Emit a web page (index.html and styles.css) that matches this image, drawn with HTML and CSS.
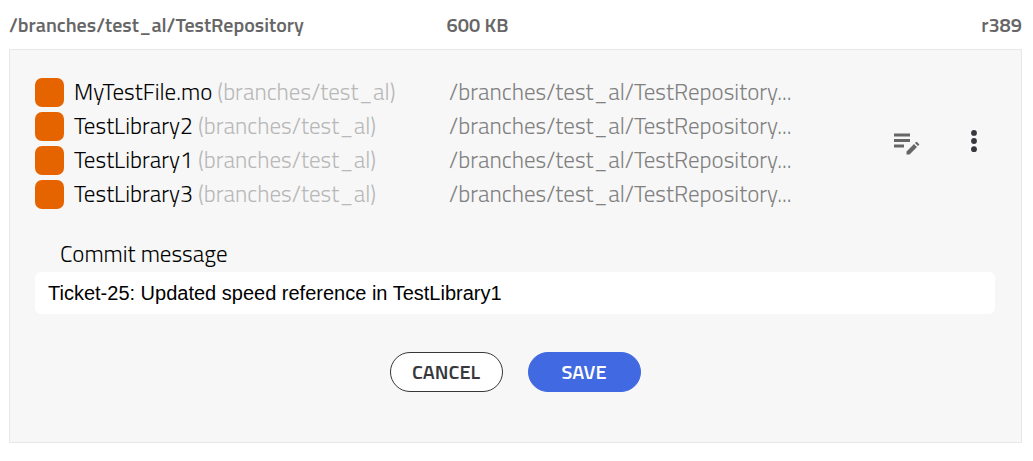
FILE: index.html
```
<!DOCTYPE html>
<html lang="en">
<head>
<meta charset="UTF-8">
<meta name="viewport" content="width=device-width, initial-scale=1.0">
<title>Commit TestRepository</title>
<link rel="stylesheet" href="styles.css">
</head>
<body>
<header class="repo-header">
    <span>/branches/test_al/TestRepository</span>
    <span>600 KB</span>
    <span>r389</span>
</header>
<main class="panel">
    <section class="changes">
        <ul class="files">
            <li class="file">
                <span class="name"><span class="status"></span>MyTestFile.mo&nbsp;<span class="branch">(branches/test_al)</span></span>
                <span class="path">/branches/test_al/TestRepository...</span>
            </li>
            <li class="file">
                <span class="name"><span class="status"></span>TestLibrary2&nbsp;<span class="branch">(branches/test_al)</span></span>
                <span class="path">/branches/test_al/TestRepository...</span>
            </li>
            <li class="file">
                <span class="name"><span class="status"></span>TestLibrary1&nbsp;<span class="branch">(branches/test_al)</span></span>
                <span class="path">/branches/test_al/TestRepository...</span>
            </li>
            <li class="file">
                <span class="name"><span class="status"></span>TestLibrary3&nbsp;<span class="branch">(branches/test_al)</span></span>
                <span class="path">/branches/test_al/TestRepository...</span>
            </li>
        </ul>
        <div class="tools">
            <button class="icon-button" type="button" aria-label="Edit message">
                <svg width="26" height="22" viewBox="0 0 26 22" fill="#666">
                    <path d="M0 0.500h16v3H0zM0 6h16v3H0zM0 11.500h10v3H0z"/>
                    <path d="M12.500 18.500L20 11L23 14L15.500 21.500H12.500zM21 10L22 9Q22.500 8.500 23 9L25 11Q25.500 11.500 25 12L24 13z"/>
                </svg>
            </button>
            <button class="icon-button" type="button" aria-label="More actions">
                <svg width="6" height="28" viewBox="0 0 6 28" fill="#37373c">
                    <circle cx="3" cy="2.900" r="2.900"/>
                    <circle cx="3" cy="11" r="2.900"/>
                    <circle cx="3" cy="19.200" r="2.900"/>
                </svg>
            </button>
        </div>
    </section>
    <form class="commit">
        <label for="message">Commit message</label>
        <input id="message" class="message" type="text" value="Ticket-25: Updated speed reference in TestLibrary1">
        <div class="buttons">
            <button class="button" type="button">CANCEL</button>
            <button class="button save" type="submit">SAVE</button>
        </div>
    </form>
</main>
</body>
</html>
```
FILE: styles.css
```
*{box-sizing:border-box;margin:0;padding:0;}
body
{
    padding: 0 11px 18px 9px;
    background: #fff;
    color: #000;
    font-family: "Titillium Web", Roboto, sans-serif;
    font-size: 23px;
    font-weight: 300;
}
.repo-header
{
    display: grid;
    grid-template-columns: 43.200% 1fr auto;
    height: 49px;
    line-height: 50px;
    color: #666;
    font-size: 20px;
    font-weight: 600;
}
.panel
{
    padding: 28px 26px 50px 25px;
    border: 1px solid #e8e8e8;
    background: #f7f7f7;
}
.changes
{
    display: flex;
    align-items: center;
}
.files
{
    flex: 1;
    display: grid;
    gap: 5px;
    list-style: none;
}
.file
{
    display: grid;
    grid-template-columns: 48.200% 1fr;
    line-height: 28px;
    white-space: nowrap;
}
.name
{
    display: flex;
}
.status
{
    width: 29px;
    height: 29px;
    margin-right: 10px;
    border-radius: 7px;
    background: #e66400;
}
.branch
{
    color: #b8b8b8;
}
.path
{
    color: #808080;
}
.tools
{
    display: flex;
    align-items: center;
    gap: 51px;
    margin-right: 18px;
}
.icon-button
{
    display: flex;
    border: 0;
    background: none;
    cursor: pointer;
}
.commit
{
    display: flex;
    flex-direction: column;
    margin-top: 31px;
}
.commit label
{
    padding-left: 25px;
    margin-bottom: 4px;
    line-height: 28px;
}
.message
{
    height: 42px;
    padding: 0 13px;
    border: 0;
    border-radius: 6px;
    background: #fff;
    color: #000;
    font-family: "Liberation Sans", Arial, sans-serif;
    font-size: 20px;
}
.buttons
{
    display: flex;
    justify-content: center;
    gap: 25px;
    margin-top: 38px;
}
.button
{
    width: 113px;
    height: 40px;
    padding-bottom: 2px;
    border: 1px solid #37373c;
    border-radius: 20px;
    background: #fff;
    color: #37373c;
    font-family: inherit;
    font-size: 20px;
    font-weight: 600;
    cursor: pointer;
}
.save
{
    border-color: #4169e1;
    background: #4169e1;
    color: #fff;
}
```
